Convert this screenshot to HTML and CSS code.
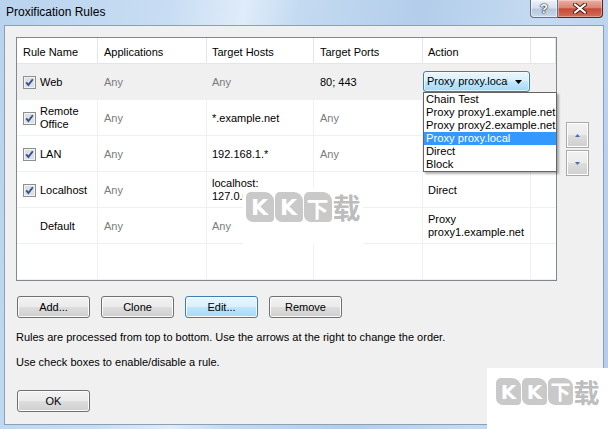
FILE: index.html
```html
<!DOCTYPE html>
<html>
<head>
<meta charset="utf-8">
<link rel="stylesheet" href="styles.css">
</head>
<body>
<div class="window">
  <div class="titlebar">
    <span class="title">Proxification Rules</span>
    <div class="caps">
      <div class="cap help">?</div>
      <div class="cap close">
        <svg width="14" height="11" viewBox="0 0 14 11"><path d="M2 1.5 L12 9.5 M12 1.5 L2 9.5" stroke="#4a1c16" stroke-width="4" stroke-linecap="round"/><path d="M2 1.5 L12 9.5 M12 1.5 L2 9.5" stroke="#ffffff" stroke-width="2.2" stroke-linecap="round"/></svg>
      </div>
    </div>
  </div>
  <div class="client">
    <div class="top">
      <div class="list">
        <div class="row header">
          <div class="cell">Rule Name</div>
          <div class="cell">Applications</div>
          <div class="cell">Target Hosts</div>
          <div class="cell">Target Ports</div>
          <div class="cell">Action</div>
          <div class="cell"></div>
        </div>
        <div class="row sel">
          <div class="cell name"><svg class="cb" width="13" height="13" viewBox="0 0 13 13"><rect x="0.5" y="0.5" width="12" height="12" fill="#f2f2f2" stroke="#8e8f8f"/><rect x="2" y="2" width="9" height="9" fill="#dcdfe3"/><path d="M3.2 6.4 L5.4 9 L9.8 3.2" stroke="#33518f" stroke-width="1.9" fill="none"/></svg><span>Web</span></div>
          <div class="cell any">Any</div>
          <div class="cell any">Any</div>
          <div class="cell">80; 443</div>
          <div class="cell action">
            <div class="combo">
              <span class="combo-text">Proxy proxy.local</span>
              <svg class="combo-arrow" width="7" height="4" viewBox="0 0 7 4"><path d="M0 0 H7 L3.5 4 Z" fill="#000"/></svg>
              <div class="dropdown">
                <div class="item">Chain Test</div>
                <div class="item">Proxy proxy1.example.net</div>
                <div class="item">Proxy proxy2.example.net</div>
                <div class="item hl">Proxy proxy.local</div>
                <div class="item">Direct</div>
                <div class="item">Block</div>
              </div>
            </div>
          </div>
          <div class="cell"></div>
        </div>
        <div class="row">
          <div class="cell name"><svg class="cb" width="13" height="13" viewBox="0 0 13 13"><rect x="0.5" y="0.5" width="12" height="12" fill="#f2f2f2" stroke="#8e8f8f"/><rect x="2" y="2" width="9" height="9" fill="#dcdfe3"/><path d="M3.2 6.4 L5.4 9 L9.8 3.2" stroke="#33518f" stroke-width="1.9" fill="none"/></svg><span>Remote<br>Office</span></div>
          <div class="cell any">Any</div>
          <div class="cell">*.example.net</div>
          <div class="cell any">Any</div>
          <div class="cell"></div>
          <div class="cell"></div>
        </div>
        <div class="row">
          <div class="cell name"><svg class="cb" width="13" height="13" viewBox="0 0 13 13"><rect x="0.5" y="0.5" width="12" height="12" fill="#f2f2f2" stroke="#8e8f8f"/><rect x="2" y="2" width="9" height="9" fill="#dcdfe3"/><path d="M3.2 6.4 L5.4 9 L9.8 3.2" stroke="#33518f" stroke-width="1.9" fill="none"/></svg><span>LAN</span></div>
          <div class="cell any">Any</div>
          <div class="cell">192.168.1.*</div>
          <div class="cell any">Any</div>
          <div class="cell"></div>
          <div class="cell"></div>
        </div>
        <div class="row">
          <div class="cell name"><svg class="cb" width="13" height="13" viewBox="0 0 13 13"><rect x="0.5" y="0.5" width="12" height="12" fill="#f2f2f2" stroke="#8e8f8f"/><rect x="2" y="2" width="9" height="9" fill="#dcdfe3"/><path d="M3.2 6.4 L5.4 9 L9.8 3.2" stroke="#33518f" stroke-width="1.9" fill="none"/></svg><span>Localhost</span></div>
          <div class="cell any">Any</div>
          <div class="cell">localhost:<br>127.0.0.1</div>
          <div class="cell"></div>
          <div class="cell">Direct</div>
          <div class="cell"></div>
        </div>
        <div class="row">
          <div class="cell name"><span class="cb-space"></span><span>Default</span></div>
          <div class="cell any">Any</div>
          <div class="cell any">Any</div>
          <div class="cell"></div>
          <div class="cell">Proxy<br>proxy1.example.net</div>
          <div class="cell"></div>
        </div>
        <div class="row">
          <div class="cell"></div>
          <div class="cell"></div>
          <div class="cell"></div>
          <div class="cell"></div>
          <div class="cell"></div>
          <div class="cell"></div>
        </div>
      </div>
      <div class="side">
        <div class="arrow-btn"><svg width="5" height="3" viewBox="0 0 5 3"><path d="M2.5 0 L5 3 H0 Z" fill="#3d6fb6"/></svg></div>
        <div class="arrow-btn"><svg width="5" height="3" viewBox="0 0 5 3"><path d="M0 0 H5 L2.5 3 Z" fill="#3d6fb6"/></svg></div>
      </div>
    </div>
    <div class="actions">
      <button class="btn">Add...</button>
      <button class="btn">Clone</button>
      <button class="btn focus">Edit...</button>
      <button class="btn">Remove</button>
    </div>
    <p class="note first">Rules are processed from top to bottom. Use the arrows at the right to change the order.</p>
    <p class="note">Use check boxes to enable/disable a rule.</p>
    <div class="ok-row"><button class="btn">OK</button></div>
  </div>
  <div class="wm wm1"><span>K</span><span>K</span><span>下</span><span class="zai">载</span></div>
  <div class="wm wm2"><span>K</span><span>K</span><span>下</span><span class="zai">载</span></div>
</div>
</body>
</html>
```

FILE: styles.css
```css
* { box-sizing: border-box; }

body {
  margin: 0;
  width: 608px;
  height: 429px;
  overflow: hidden;
  font-family: "Liberation Sans", Arial, sans-serif;
  font-size: 11px;
  color: #000;
}

.window {
  position: relative;
  width: 608px;
  height: 429px;
  display: flex;
  flex-direction: column;
  background: linear-gradient(100deg, #b9d3ee 0%, #c8ddf3 25%, #dfecf9 36%, #c4daf1 44%, #b3cdea 62%, #c6dbf2 80%, #b2cceb 100%);
}

.titlebar {
  height: 25px;
  display: flex;
  justify-content: space-between;
  align-items: flex-start;
  flex: none;
}

.title {
  padding: 5px 0 0 6px;
  font-size: 12px;
  line-height: 14px;
  color: #000;
}

.caps {
  display: flex;
  margin-right: 5px;
}

.cap {
  height: 18px;
  display: flex;
  align-items: center;
  justify-content: center;
}

.cap.help {
  width: 28px;
  border: 1px solid #5f738e;
  border-top: none;
  border-radius: 0 0 0 4px;
  background: linear-gradient(#eef3f9 0%, #d4dfec 48%, #b7c8dc 52%, #c9d8ea 100%);
  box-shadow: inset 0 0 0 1px rgba(255,255,255,0.5);
  color: #fff;
  font-weight: bold;
  font-size: 13px;
  text-shadow: 0 0 1px #1d2a3c, 0 0 1px #1d2a3c, 0 0 2px #1d2a3c;
}

.cap.close {
  width: 45px;
  border: 1px solid #5a2219;
  border-top: none;
  border-left: none;
  border-radius: 0 0 4px 0;
  background: linear-gradient(#eab0a3 0%, #d98574 45%, #c54b36 52%, #d26d58 100%);
  box-shadow: inset 0 0 0 1px rgba(255,255,255,0.35);
}

.client {
  flex: none;
  height: 400px;
  margin: 0 4px 4px 4px;
  background: #f0f0f0;
  border: 1px solid #8d9fb6;
  padding: 11px 0 0 11px;
}

.top {
  display: flex;
  gap: 9px;
  align-items: flex-start;
}

.list {
  width: 541px;
  border: 1px solid #828790;
  background: #fff;
}

.row {
  display: grid;
  grid-template-columns: 81px 109px 107px 109px 108px 25px;
}

.cell {
  height: 36px;
  display: flex;
  align-items: center;
  padding-left: 6px;
  padding-top: 1px;
  line-height: 13px;
  border-right: 1px solid #f0f0f0;
  border-bottom: 1px solid #f0f0f0;
  white-space: nowrap;
}

.cell:last-child { border-right: none; }

.header .cell {
  height: 26px;
  padding-top: 4px;
  padding-left: 6px;
  border-right: 1px solid #e3e5e8;
  border-bottom: 1px solid #e3e5e8;
}

.row > .cell:nth-child(3), .row > .cell:nth-child(5) { padding-left: 5px; }

.sel .cell { background: #f0f0f0; }

.any { color: #7b7b7b; }

.name { gap: 4px; }

.cb { flex: none; }

.cb-space { width: 13px; flex: none; }

.row > .cell.action {
  padding-left: 0;
  padding-top: 0;
  align-items: flex-start;
}

.combo {
  position: relative;
  margin-top: 7px;
  width: 107px;
  height: 21px;
  border: 1px solid #3c7fb1;
  border-radius: 3px;
  background: linear-gradient(#eaf6fd 0%, #d9f0fc 45%, #bee6fd 52%, #a7d9f5 100%);
  box-shadow: inset 0 0 0 1px rgba(255,255,255,0.6);
  display: flex;
  align-items: center;
}

.combo-text {
  width: 84px;
  overflow: hidden;
  padding-left: 3px;
  white-space: nowrap;
}

.combo-arrow {
  margin-left: 7px;
}

.dropdown {
  position: absolute;
  left: -1px;
  top: 20px;
  width: 134px;
  border: 1px solid #646464;
  background: #fff;
  box-shadow: 2px 2px 2px rgba(0,0,0,0.3);
  z-index: 5;
}

.item {
  height: 13px;
  line-height: 13px;
  padding-left: 2px;
  font-size: 11.2px;
}

.item.hl {
  background: #3399ff;
  color: #fff;
}

.side {
  display: flex;
  flex-direction: column;
  gap: 2px;
  margin-top: 85px;
}

.arrow-btn {
  width: 23px;
  height: 26px;
  border: 1px solid #a9a9a9;
  box-shadow: inset 0 0 0 1px #fff;
  background: linear-gradient(#f2f2f2 0%, #ebebeb 48%, #dddddd 52%, #cfcfcf 100%);
  display: flex;
  align-items: center;
  justify-content: center;
}

.actions {
  display: flex;
  gap: 11px;
  margin: 15px 0 0 1px;
}

.btn {
  width: 73px;
  height: 22px;
  padding: 0;
  border: 1px solid #707070;
  border-radius: 3px;
  background: linear-gradient(#f2f2f2 0%, #ebebeb 48%, #dddddd 52%, #cfcfcf 100%);
  box-shadow: inset 0 0 0 1px #fbfbfb;
  font-family: "Liberation Sans", Arial, sans-serif;
  font-size: 11px;
  color: #000;
}

.btn.focus {
  border-color: #3c7fb1;
  background: linear-gradient(#eaf6fd 0%, #d9f0fc 48%, #bee6fd 52%, #a7d9f5 100%);
}

.note {
  margin: 12px 0 0 0;
  line-height: 13px;
}

.note.first { margin-top: 13px; }

.ok-row {
  margin: 21px 0 0 1px;
}

.wm {
  position: absolute;
  background: #fff;
  display: flex;
  align-items: flex-start;
  justify-content: center;
  gap: 1px;
}

.wm span {
  display: flex;
  align-items: center;
  justify-content: center;
  background: #c9c9c9;
  color: #fff;
  font-family: "DejaVu Sans", "Noto Sans CJK SC", sans-serif;
  font-weight: bold;
  border-radius: 5px 9px 4px 7px;
}

.wm span.zai {
  background: transparent;
  color: #bdbdbd;
  font-family: "Noto Sans CJK SC", sans-serif;
}

.wm1 {
  left: 243px;
  top: 187px;
  width: 120px;
  height: 58px;
  padding-top: 5px;
}

.wm1 span {
  width: 28px;
  height: 30px;
  font-size: 22px;
}

.wm1 span.zai { font-size: 28px; }

.wm2 {
  left: 487px;
  top: 368px;
  width: 121px;
  height: 61px;
  padding-top: 10px;
}

.wm2 span {
  width: 25px;
  height: 27px;
  font-size: 20px;
}

.wm2 span.zai { font-size: 26px; }
```
